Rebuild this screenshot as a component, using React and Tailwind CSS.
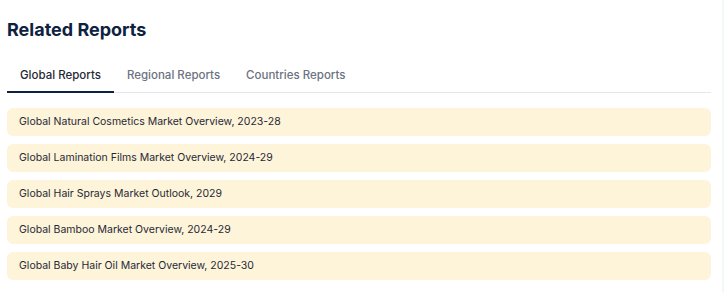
const tabs = ["Global Reports", "Regional Reports", "Countries Reports"];

const reports = [
	"Global Natural Cosmetics Market Overview, 2023-28",
	"Global Lamination Films Market Overview, 2024-29",
	"Global Hair Sprays Market Outlook, 2029",
	"Global Bamboo Market Overview, 2024-29",
	"Global Baby Hair Oil Market Overview, 2025-30",
];

export default function App() {
	return (
		<div className="w-[724px] h-[292px] bg-white flex font-['Inter',sans-serif] overflow-hidden">
			<div className="w-[711px] pl-[7px] pt-[17px]">
				<h2 className="text-[18px] leading-[26px] font-bold text-[#0d2240]">
					Related Reports
				</h2>

				<div className="mt-[14px] flex border-b border-gray-200">
					{tabs.map((tab, i) => (
						<button
							key={tab}
							className={`px-[13px] pt-[10px] pb-[8px] text-[11.5px] leading-[16px] font-medium -mb-px border-b-2 ${
								i === 0
									? "border-[#0d2240] text-[#1f2937]"
									: "border-transparent text-[#6b7280]"
							}`}>
							{tab}
						</button>
					))}
				</div>

				<div className="mt-[15px] flex flex-col gap-2">
					{reports.map((r) => (
						<div
							key={r}
							className="h-[28px] flex items-center px-3 rounded-md bg-[#fef4d9] text-[10.5px] text-[#1f2937]">
							{r}
						</div>
					))}
				</div>
			</div>
			<div className="flex-1" />
			<div className="w-[2px] bg-[#f1f8f8]" />
		</div>
	);
}
